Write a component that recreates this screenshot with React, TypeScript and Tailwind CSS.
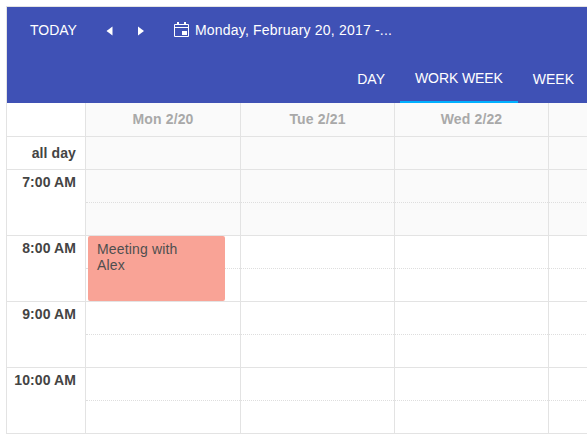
const days = ["Mon 2/20", "Tue 2/21", "Wed 2/22", ""];
const hours = [
  { label: "7:00 AM", off: true },
  { label: "8:00 AM", off: false },
  { label: "9:00 AM", off: false },
  { label: "10:00 AM", off: false },
];
const widths = ["w-[155px]", "w-[154px]", "w-[154px]", "w-[154px]"];

function Toolbar() {
  return (
    <div className="h-[96px] bg-[#3f51b5] text-white text-[14px] flex flex-col">
      <div className="flex items-center h-[48px] pl-[23px] pb-[2px]">
        <span>TODAY</span>
        <svg width="8" height="10" viewBox="0 0 8 10" className="ml-[29px] mt-[2px]">
          <path d="M6.5 0.5V9.5L0.5 5Z" fill="#fff" />
        </svg>
        <svg width="8" height="10" viewBox="0 0 8 10" className="ml-[23px] mt-[2px]">
          <path d="M1 0.5V9.5L7 5Z" fill="#fff" />
        </svg>
        <svg width="17" height="17" viewBox="0 0 17 17" fill="none" className="ml-[28px] mt-[-1px]">
          <path d="M1.5 3.5H15.5V15.5H1.5ZM1.5 6.5H15.5" stroke="#fff" />
          <path d="M5 1V4M12 1V4" stroke="#fff" strokeWidth="2" />
          <path d="M9 10H14V14H9Z" fill="#fff" />
        </svg>
        <span className="ml-[5px] tracking-[0.2px]">Monday, February 20, 2017 -...</span>
      </div>
      <div className="flex justify-end h-[48px]">
        <div className="h-full px-[15px] flex items-center">DAY</div>
        <div className="h-full px-[15px] flex items-center border-b-2 border-[#00b0ff] tracking-[-0.1px]">WORK WEEK</div>
        <div className="h-full px-[15px] flex items-center">WEEK</div>
      </div>
    </div>
  );
}

function HourRow({ label, off }: { label: string; off: boolean }) {
  const bg = off ? "bg-[#fafafa]" : "bg-white";
  return (
    <div className="flex">
      <div className="w-[79px] h-[66px] shrink-0 border-r border-b border-[#e3e3e3] pr-[9px] pt-[2px] text-right font-bold text-[#444] tracking-[0.1px]">
        {label}
      </div>
      {widths.map((w, i) => (
        <div key={i} className={`${w} shrink-0 h-[66px] relative border-r border-b border-[#e3e3e3] ${bg}`}>
          <div className="h-[33px] border-b border-dotted border-[#dedede]" />
          {label === "8:00 AM" && i === 0 && (
            <div className="absolute left-[2px] top-0 w-[137px] h-[65px] rounded-[2px] bg-[#f9a396] text-[#4f4f4f] pl-[9px] pt-[5px] pr-[30px] leading-[16px] tracking-[0.15px]">
              Meeting with Alex
            </div>
          )}
        </div>
      ))}
    </div>
  );
}

export default function App() {
  return (
    <div className="h-screen overflow-hidden bg-white font-['Liberation_Sans',Arial,sans-serif] text-[14px]">
      <div className="w-[610px] ml-[6px] mt-[6px] border-l border-t border-[#e3e3e3]">
        <div className="w-[582px]">
          <Toolbar />
          <div className="flex">
            <div className="w-[79px] h-[34px] shrink-0 border-r border-b border-[#e3e3e3]" />
            {days.map((d, i) => (
              <div key={i} className={`${widths[i]} shrink-0 h-[34px] flex items-center justify-center border-r border-b border-[#e3e3e3] bg-[#fafafa] font-bold text-[#a9a9a9] tracking-[0.15px]`}>
                {d}
              </div>
            ))}
          </div>
          <div className="flex">
            <div className="w-[79px] h-[33px] shrink-0 border-r border-b border-[#e3e3e3] pr-[9px] flex items-center justify-end font-bold text-[#444] tracking-[0.1px]">
              all day
            </div>
            {widths.map((w, i) => (
              <div key={i} className={`${w} shrink-0 h-[33px] border-r border-b border-[#e3e3e3] bg-[#fafafa]`} />
            ))}
          </div>
          {hours.map((h) => (
            <HourRow key={h.label} label={h.label} off={h.off} />
          ))}
        </div>
      </div>
    </div>
  );
}
